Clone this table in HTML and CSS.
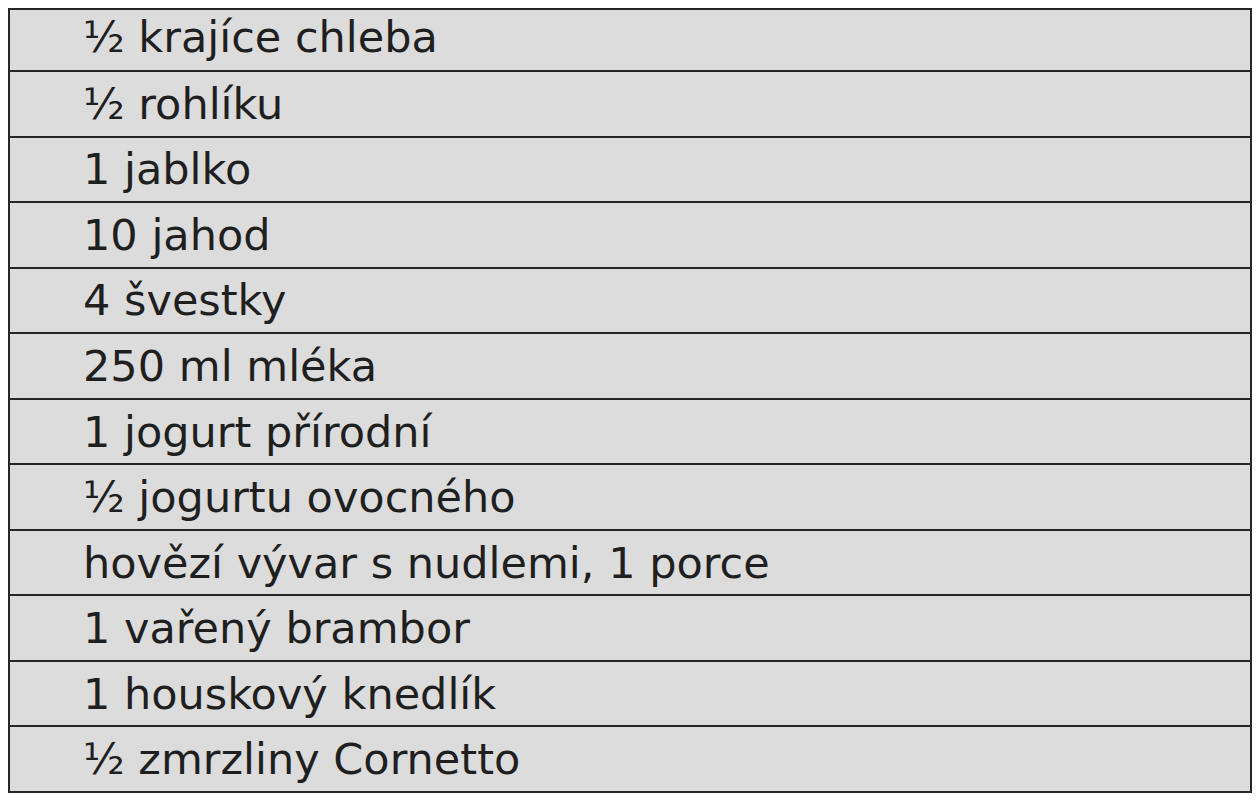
FILE: index.html
```html
<!DOCTYPE html>
<html lang="cs">
<head>
<meta charset="utf-8">
<link rel="stylesheet" href="styles.css">
</head>
<body>
<div class="list">
  <div class="row first">½ krajíce chleba</div>
  <div class="row">½ rohlíku</div>
  <div class="row">1 jablko</div>
  <div class="row">10 jahod</div>
  <div class="row">4 švestky</div>
  <div class="row">250 ml mléka</div>
  <div class="row">1 jogurt přírodní</div>
  <div class="row">½ jogurtu ovocného</div>
  <div class="row">hovězí vývar s nudlemi, 1 porce</div>
  <div class="row">1 vařený brambor</div>
  <div class="row">1 houskový knedlík</div>
  <div class="row">½ zmrzliny Cornetto</div>
</div>
</body>
</html>
```
FILE: styles.css
```css
html, body {
  margin: 0;
  padding: 0;
  background: #ffffff;
}
body {
  padding: 8px 5px 0 8px;
}
.list {
  width: 1240px;
  border: 2px solid #262626;
  background: #dcdcdc;
  display: flex;
  flex-direction: column;
}
.row {
  height: 63.55px;
  box-sizing: border-box;
  display: flex;
  align-items: center;
  padding-left: 73px;
  font-family: "DejaVu Sans", sans-serif;
  font-size: 43px;
  line-height: 50px;
  color: #1f1f1f;
  border-top: 2px solid #262626;
  flex: none;
}
.row:not(.first) {
  height: 65.55px;
}
.row.first {
  height: 60px;
  border-top: none;
  padding-bottom: 6px;
}
```
